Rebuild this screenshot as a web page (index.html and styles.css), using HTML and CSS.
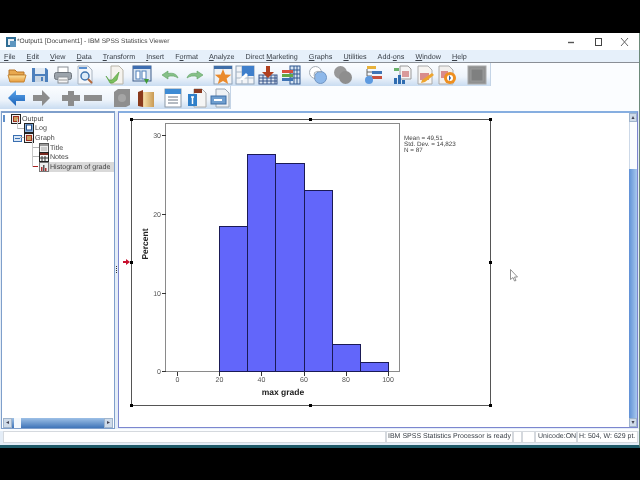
FILE: index.html
```html
<!DOCTYPE html>
<html lang="en">
<head>
<meta charset="utf-8">
<title>Output1 [Document1] - IBM SPSS Statistics Viewer</title>
<link rel="stylesheet" href="styles.css">
</head>
<body>
<svg class="sprite" width="0" height="0" aria-hidden="true">
  <defs>
    <linearGradient id="gOrange" x1="0" y1="0" x2="0" y2="1"><stop offset="0" stop-color="#fbe3a0"/><stop offset="1" stop-color="#e89a3a"/></linearGradient>
    <linearGradient id="gBlue" x1="0" y1="0" x2="0" y2="1"><stop offset="0" stop-color="#5aa4ea"/><stop offset="1" stop-color="#1b62b8"/></linearGradient>
    <linearGradient id="gBook" x1="0" y1="0" x2="1" y2="0"><stop offset="0" stop-color="#8a3a1c"/><stop offset=".3" stop-color="#8a3a1c"/><stop offset=".35" stop-color="#f6dfa8"/><stop offset="1" stop-color="#c99a54"/></linearGradient>
    <symbol id="i-open" viewBox="0 0 20 20"><path d="M2 5h6l2 2h7v3H2z" fill="#e9a94f" stroke="#b9772a"/><path d="M1 10h18l-2 7H3z" fill="url(#gOrange)" stroke="#c58432"/></symbol>
    <symbol id="i-save" viewBox="0 0 20 20"><path d="M2 3h14l2 2v12H2z" fill="#4d80bd"/><rect x="5" y="3" width="10" height="6" fill="#dfe9f4"/><rect x="5" y="11" width="10" height="6" fill="#c9d6e4"/><rect x="11" y="12" width="2" height="4" fill="#4d80bd"/></symbol>
    <symbol id="i-print" viewBox="0 0 20 20"><rect x="5" y="2" width="10" height="6" fill="#fff" stroke="#8a8f96"/><rect x="1.5" y="7.5" width="17" height="7" rx="2" fill="#9ba3ab" stroke="#6d747c"/><rect x="5" y="12" width="10" height="6" fill="#f5f5f5" stroke="#8a8f96"/><path d="M6 15h8" stroke="#999"/></symbol>
    <symbol id="i-preview" viewBox="0 0 20 20"><path d="M3 1h10l4 4v14H3z" fill="#f4f7fb" stroke="#aab4c0"/><rect x="4" y="2" width="8" height="2" fill="#5a90d0"/><circle cx="10" cy="11" r="4" fill="#dcebf8" stroke="#3f74ae" stroke-width="1.5"/><path d="M13 14l4 4" stroke="#b5683a" stroke-width="2"/></symbol>
    <symbol id="i-recall" viewBox="0 0 20 20"><path d="M6 1h8l4 4v14H6z" fill="#f5f3ee" stroke="#b8b4a8"/><path d="M1 11l3 4 3 0 7-8-2 8-4 3H5z" fill="#7dbf5f" stroke="#4f9a38" stroke-width=".6"/></symbol>
    <symbol id="i-goto" viewBox="0 0 20 20"><rect x="1" y="1" width="18" height="15" fill="#dbe6f2" stroke="#3f5f8c"/><rect x="1" y="1" width="18" height="3" fill="#3d6db0"/><rect x="4" y="6" width="4" height="8" fill="#fff" stroke="#4f7fb8"/><rect x="10" y="6" width="4" height="8" fill="#fff" stroke="#4f7fb8"/><path d="M12 14h5l-2.500 5z" fill="#3f9a36"/></symbol>
    <symbol id="i-undo" viewBox="0 0 20 20"><path d="M2 10l6-4v2.500c5-1 9 .5 10 4.500-3-2-6-2.500-10-1.500V14z" fill="#86c088" stroke="#5da060" stroke-width=".6"/></symbol>
    <symbol id="i-redo" viewBox="0 0 20 20"><path d="M18 10l-6-4v2.500c-5-1-9 .5-10 4.500 3-2 6-2.500 10-1.500V14z" fill="#86c088" stroke="#5da060" stroke-width=".6"/></symbol>
    <symbol id="i-star" viewBox="0 0 20 20"><rect x="1" y="1" width="18" height="18" fill="#f0f2f5" stroke="#8ea2b8"/><rect x="1" y="1" width="18" height="3" fill="#3f6ea8"/><path d="M10 4l2.200 5.500 6 .3-4.600 3.700 1.600 5.500-5.200-3-5.200 3 1.600-5.500-4.600-3.700 6-.3z" fill="#ea8a2c"/></symbol>
    <symbol id="i-gocase" viewBox="0 0 20 20"><rect x="1" y="1" width="18" height="18" fill="#f2f4f7" stroke="#8ea2b8"/><path d="M1 7h18M1 13h18M7 1v18M13 1v18" stroke="#a9b7c6"/><rect x="7" y="1" width="12" height="10" fill="#3f7fcb"/><path d="M4 15l7-7 2 2-5 5z" fill="#fff"/></symbol>
    <symbol id="i-insert" viewBox="0 0 20 20"><rect x="1" y="10" width="18" height="9" fill="#dfe7f0" stroke="#37558a"/><path d="M1 13h18M1 16h18M5 10v9M9 10v9M13 10v9M17 10v9" stroke="#37558a"/><path d="M8 1h4v6h4l-6 6-6-6h4z" fill="#b0401f"/></symbol>
    <symbol id="i-table" viewBox="0 0 20 20"><rect x="9" y="1" width="10" height="18" fill="#d9e6f3" stroke="#2f568f"/><path d="M9 5h10M9 9h10M9 13h10M13 1v18M16 1v18" stroke="#2f568f"/><rect x="1" y="5" width="11" height="3" fill="#d94f3d"/><rect x="1" y="9" width="11" height="3" fill="#62a845"/><rect x="1" y="13" width="11" height="3" fill="#3f74b5"/></symbol>
    <symbol id="i-sets" viewBox="0 0 20 20"><circle cx="7.500" cy="7.500" r="6" fill="#fff" stroke="#a6aeb6"/><circle cx="12.500" cy="12.500" r="6" fill="#8db8ea" stroke="#6f95c4"/><path d="M7.500 13.500a6 6 0 0 1-1-6 6 6 0 0 1 7 0" fill="none" stroke="#a6aeb6"/></symbol>
    <symbol id="i-setsoff" viewBox="0 0 20 20"><circle cx="7.500" cy="7.500" r="6.500" fill="#989898"/><circle cx="12.500" cy="12.500" r="6.500" fill="#8e8e8e"/></symbol>
    <symbol id="i-tree" viewBox="0 0 20 20"><rect x="4" y="1" width="9" height="3" fill="#e8b23c"/><rect x="9" y="6" width="10" height="3" fill="#3f74b5"/><rect x="9" y="11" width="10" height="3" fill="#c8503c"/><path d="M4 4v7h5M4 7h5" stroke="#666" fill="none"/><circle cx="6" cy="15" r="4" fill="#5d9ae0"/></symbol>
    <symbol id="i-chartdoc" viewBox="0 0 20 20"><path d="M8 1h8l3 3v10H8z" fill="#f5f5f5" stroke="#9a9a9a"/><rect x="10" y="6" width="7" height="6" fill="#d99a9a"/><path d="M2 3h5v3H2z" fill="#69b26a"/><rect x="2" y="13" width="3" height="6" fill="#2f6cb0"/><rect x="6" y="10" width="3" height="9" fill="#2f6cb0"/><rect x="10" y="15" width="3" height="4" fill="#2f6cb0"/></symbol>
    <symbol id="i-docpen" viewBox="0 0 20 20"><path d="M3 1h10l4 4v14H3z" fill="#f7f5f2" stroke="#aaa"/><rect x="5" y="8" width="9" height="7" fill="#d98c8c"/><path d="M7 15l10-7 2 2-9 7-4 1z" fill="#eda52f"/></symbol>
    <symbol id="i-docplay" viewBox="0 0 20 20"><path d="M2 1h10l4 4v14H2z" fill="#f2f0ee" stroke="#aaa"/><rect x="4" y="6" width="7" height="7" fill="#d98c8c"/><circle cx="13" cy="13" r="6" fill="#ee8f1f"/><circle cx="13" cy="13" r="3" fill="#fff"/><path d="M12 10l2 3-2 3z" fill="#2d5f9f"/></symbol>
    <symbol id="i-gray" viewBox="0 0 20 20"><rect x="1" y="1" width="18" height="18" fill="#8f9090" stroke="#a8a8a8"/><rect x="4" y="4" width="12" height="12" fill="#7f8080" stroke="#999"/></symbol>
    <symbol id="i-back" viewBox="0 0 20 20"><path d="M1 10l8-8v5h9v6H9v5z" fill="url(#gBlue)"/></symbol>
    <symbol id="i-fwd" viewBox="0 0 20 20"><path d="M19 10l-8-8v5H2v6h9v5z" fill="#8c8c8c"/></symbol>
    <symbol id="i-plus" viewBox="0 0 20 20"><path d="M7 3h6v4h6v6h-6v5H7v-5H1V7h6z" fill="#8c8c8c"/></symbol>
    <symbol id="i-minus" viewBox="0 0 20 20"><rect x="1" y="7" width="18" height="6" fill="#8c8c8c"/></symbol>
    <symbol id="i-box" viewBox="0 0 20 20"><path d="M2 4l4-3h12v16l-4 2H2z" fill="#8e8e8e"/><circle cx="10" cy="10" r="4" fill="#a5a5a5"/></symbol>
    <symbol id="i-book" viewBox="0 0 20 20"><path d="M2 4l5-2v2h11v15H7l-5-1z" fill="url(#gBook)"/></symbol>
    <symbol id="i-head" viewBox="0 0 20 20"><rect x="2" y="1" width="16" height="18" fill="#fff" stroke="#8a97a6"/><rect x="2" y="1" width="16" height="5" fill="#3d8bd4"/><path d="M5 9h10M5 12h10M5 15h10" stroke="#6b7785"/></symbol>
    <symbol id="i-txt" viewBox="0 0 20 20"><path d="M7 1h8l4 4v14H7z" fill="#f5f5f5" stroke="#aaa"/><rect x="7" y="1" width="8" height="4" fill="#8b3a20"/><rect x="1" y="6" width="9" height="12" fill="#2f7fc8"/><path d="M4 9h3M5.500 9v7" stroke="#fff" stroke-width="1.500"/></symbol>
    <symbol id="i-export" viewBox="0 0 20 20"><path d="M6 1h9l4 4v14H6z" fill="#eef1f4" stroke="#9aa5b1"/><rect x="1" y="8" width="15" height="8" fill="#6f9ecf" stroke="#3f6fa5"/><path d="M4 12h8" stroke="#fff" stroke-width="2"/></symbol>
    <symbol id="n-doc" viewBox="0 0 10 10"><rect x=".5" y=".5" width="9" height="9" fill="#eee" stroke="#222"/><rect x="2.500" y="2.500" width="5" height="5" fill="#c9a060" stroke="#a03020"/></symbol>
    <symbol id="n-log" viewBox="0 0 10 10"><rect x=".5" y=".5" width="9" height="9" fill="#8db4dc" stroke="#222"/><rect x="2.500" y="2" width="5" height="5" fill="#fff" stroke="#244f8a"/></symbol>
    <symbol id="n-title" viewBox="0 0 10 10"><rect x=".5" y=".5" width="9" height="9" fill="#eee" stroke="#555"/><rect x="1" y="1" width="8" height="2" fill="#999"/><path d="M2 5h6M2 7h6" stroke="#aaa"/></symbol>
    <symbol id="n-notes" viewBox="0 0 10 10"><rect x=".5" y=".5" width="9" height="9" fill="#f4f4f4" stroke="#222"/><rect x="1" y="1" width="8" height="2" fill="#7a2b22"/><path d="M3 4v5M6 4v5M1 6h8" stroke="#333"/></symbol>
    <symbol id="n-hist" viewBox="0 0 10 10"><rect x=".5" y=".5" width="9" height="9" fill="#eee" stroke="#777"/><rect x="2" y="5" width="1.500" height="4" fill="#a33"/><rect x="4" y="3" width="1.500" height="6" fill="#555"/><rect x="6" y="6" width="1.500" height="3" fill="#a33"/></symbol>
  </defs>
</svg>

<div class="window">
  <header class="titlebar">
    <svg class="app-icon" viewBox="0 0 12 12" aria-hidden="true"><rect x="1" y="1" width="10" height="10" fill="#2f6d94"/><rect x="3" y="3" width="6" height="6" fill="#e8eef4"/><rect x="5" y="5" width="6" height="6" fill="#5f97c0"/></svg>
    <span class="title-text">*Output1 [Document1] - IBM SPSS Statistics Viewer</span>
    <div class="winctl">
      <svg class="ctl" viewBox="0 0 10 10" aria-hidden="true"><path d="M0 5.500h6" stroke="#555" stroke-width="1.400"/></svg>
      <svg class="ctl" viewBox="0 0 10 10" aria-hidden="true"><rect x="1.500" y="1.500" width="6" height="7" fill="none" stroke="#444"/></svg>
      <svg class="ctl" viewBox="0 0 10 10" aria-hidden="true"><path d="M1 1l7 8M8 1L1 9" stroke="#666"/></svg>
    </div>
  </header>

  <nav class="menubar">
    <span class="m"><u>F</u>ile</span>
    <span class="m"><u>E</u>dit</span>
    <span class="m"><u>V</u>iew</span>
    <span class="m"><u>D</u>ata</span>
    <span class="m"><u>T</u>ransform</span>
    <span class="m"><u>I</u>nsert</span>
    <span class="m">F<u>o</u>rmat</span>
    <span class="m"><u>A</u>nalyze</span>
    <span class="m">Direct <u>M</u>arketing</span>
    <span class="m"><u>G</u>raphs</span>
    <span class="m"><u>U</u>tilities</span>
    <span class="m">Add-<u>o</u>ns</span>
    <span class="m"><u>W</u>indow</span>
    <span class="m"><u>H</u>elp</span>
  </nav>

  <div class="toolbar tb1">
    <svg class="ic"><use href="#i-open"/></svg>
    <svg class="ic d1"><use href="#i-save"/></svg>
    <svg class="ic d1"><use href="#i-print"/></svg>
    <svg class="ic"><use href="#i-preview"/></svg>
    <svg class="ic d8"><use href="#i-recall"/></svg>
    <svg class="ic d5"><use href="#i-goto"/></svg>
    <svg class="ic d6"><use href="#i-undo"/></svg>
    <svg class="ic d3"><use href="#i-redo"/></svg>
    <svg class="ic d6"><use href="#i-star"/></svg>
    <svg class="ic"><use href="#i-gocase"/></svg>
    <svg class="ic d1"><use href="#i-insert"/></svg>
    <svg class="ic d1"><use href="#i-table"/></svg>
    <svg class="ic d5"><use href="#i-sets"/></svg>
    <svg class="ic d3"><use href="#i-setsoff"/></svg>
    <svg class="ic d8"><use href="#i-tree"/></svg>
    <svg class="ic d7"><use href="#i-chartdoc"/></svg>
    <svg class="ic d1"><use href="#i-docpen"/></svg>
    <svg class="ic"><use href="#i-docplay"/></svg>
    <svg class="ic d8"><use href="#i-gray"/></svg>
  </div>

  <div class="toolbar tb2">
    <svg class="ic"><use href="#i-back"/></svg>
    <svg class="ic d2"><use href="#i-fwd"/></svg>
    <svg class="ic d8"><use href="#i-plus"/></svg>
    <svg class="ic"><use href="#i-minus"/></svg>
    <svg class="ic d7"><use href="#i-box"/></svg>
    <svg class="ic d2"><use href="#i-book"/></svg>
    <svg class="ic d5"><use href="#i-head"/></svg>
    <svg class="ic d2"><use href="#i-txt"/></svg>
    <svg class="ic d1"><use href="#i-export"/></svg>
  </div>

  <main class="panes">
    <aside class="outline">
      <ul class="tree">
        <li class="row lvl0"><span class="exp exp-min"></span><svg class="node"><use href="#n-doc"/></svg><span class="lbl">Output</span></li>
        <li class="row lvl1"><span class="branch"></span><svg class="node"><use href="#n-log"/></svg><span class="lbl">Log</span></li>
        <li class="row lvl1"><span class="exp exp-box"></span><svg class="node"><use href="#n-doc"/></svg><span class="lbl">Graph</span></li>
        <li class="row lvl2"><span class="branch"></span><svg class="node"><use href="#n-title"/></svg><span class="lbl">Title</span></li>
        <li class="row lvl2"><span class="branch"></span><svg class="node"><use href="#n-notes"/></svg><span class="lbl">Notes</span></li>
        <li class="row lvl2"><span class="branch branch-red"></span><span class="sel"><svg class="node"><use href="#n-hist"/></svg><span class="lbl">Histogram of grade</span></span></li>
      </ul>
      <div class="hscroll">
        <span class="sb-btn">&#9666;</span>
        <span class="hthumb"></span>
        <span class="htrack"></span>
        <span class="sb-btn">&#9656;</span>
      </div>
    </aside>
    <div class="splitter"><span class="grip"></span></div>
    <section class="content">
      <svg class="canvas" viewBox="0 0 510 315" aria-label="Histogram of max grade">
        <g transform="translate(-119,-113)">
          <rect class="frame" x="131.500" y="119.500" width="359" height="286"/>
          <g class="handle">
            <rect x="130" y="118" width="3" height="3"/><rect x="309" y="118" width="3" height="3"/><rect x="489" y="118" width="3" height="3"/>
            <rect x="130" y="261" width="3" height="3"/><rect x="489" y="261" width="3" height="3"/>
            <rect x="130" y="404" width="3" height="3"/><rect x="309" y="404" width="3" height="3"/><rect x="489" y="404" width="3" height="3"/>
          </g>
          <path d="M123 261h3v-2l4 3-4 3v-2h-3z" fill="#c8102e"/>
          <rect class="plot" x="165.500" y="123.500" width="234" height="248"/>
          <g class="bar">
            <rect x="219.500" y="226.500" width="28" height="145"/>
            <rect x="247.500" y="154.500" width="28" height="217"/>
            <rect x="275.500" y="163.500" width="29" height="208"/>
            <rect x="304.500" y="190.500" width="28" height="181"/>
            <rect x="332.500" y="344.500" width="28" height="27"/>
            <rect x="360.500" y="362.500" width="28" height="9"/>
          </g>
          <path class="tick" d="M162 135.500h4M162 214.500h4M162 293.500h4M162 371.500h4M177.500 372v4M219.500 372v4M261.500 372v4M304.500 372v4M346.500 372v4M388.500 372v4"/>
          <g class="axnum">
            <text x="161" y="137.500" text-anchor="end">30</text>
            <text x="161" y="216.500" text-anchor="end">20</text>
            <text x="161" y="295.500" text-anchor="end">10</text>
            <text x="161" y="373.500" text-anchor="end">0</text>
            <text x="177.500" y="382" text-anchor="middle">0</text>
            <text x="219.500" y="382" text-anchor="middle">20</text>
            <text x="261.500" y="382" text-anchor="middle">40</text>
            <text x="304" y="382" text-anchor="middle">60</text>
            <text x="346" y="382" text-anchor="middle">80</text>
            <text x="388" y="382" text-anchor="middle">100</text>
          </g>
          <text class="axtitle" x="283" y="395" text-anchor="middle">max grade</text>
          <text class="axtitle" transform="translate(148,244) rotate(-90)" text-anchor="middle">Percent</text>
          <g class="stats">
            <text x="404" y="140">Mean = 49,51</text>
            <text x="404" y="146">Std. Dev. = 14,823</text>
            <text x="404" y="152">N = 87</text>
          </g>
          <path d="M510.500 269.500v10l2.500-2 1.500 3.500 1.500-.5-1.500-3.500h3z" fill="#fff" stroke="#777" stroke-width=".8"/>
        </g>
      </svg>
      <div class="vscroll">
        <span class="sb-btn">&#9652;</span>
        <span class="vthumb"></span>
        <span class="vtrack"></span>
        <span class="sb-btn">&#9662;</span>
      </div>
    </section>
  </main>

  <footer class="status">
    <span class="cell cell-grow"></span>
    <span class="cell cell-proc">IBM SPSS Statistics Processor is ready</span>
    <span class="cell cell-gap"></span>
    <span class="cell cell-blank"></span>
    <span class="cell cell-uni">Unicode:ON</span>
    <span class="cell cell-size">H: 504, W: 629 pt.</span>
  </footer>
</div>
</body>
</html>
```

FILE: styles.css
```css
* { box-sizing: border-box; }
html, body { margin: 0; height: 100%; }
body {
  background: #000;
  padding-top: 33px;
  overflow: hidden;
  font-family: "Liberation Sans", Arial, sans-serif;
  color: #333;
  text-rendering: geometricPrecision;
}
.sprite { position: absolute; }

.window {
  width: 640px;
  height: 415px;
  display: flex;
  flex-direction: column;
  background: #fbfdff;
  border-bottom: 3px solid #1f5a68;
  border-right: 1px solid #6d8a7a;
  will-change: transform;
}

/* title bar */
.titlebar {
  height: 17px;
  flex: none;
  background: #fff;
  display: flex;
  align-items: center;
  padding-left: 5px;
  font-size: 6.6px;
  color: #444;
}
.app-icon { width: 12px; height: 12px; margin-right: 0; }
.winctl { margin-left: auto; display: flex; gap: 16px; padding-right: 9px; }
.ctl { width: 10px; height: 10px; }

/* menu bar */
.menubar {
  height: 13px;
  flex: none;
  background: #e6f0fa;
  border-bottom: 1px solid #8a8f96;
  display: flex;
  align-items: center;
  gap: 11px;
  font-size: 7.2px;
  color: #3a4048;
  padding-left: 4px;
}
.m { display: block; white-space: nowrap; }

/* toolbars */
.toolbar {
  display: flex;
  align-items: center;
  gap: 2px;
  height: 23px;
  flex: none;
  padding-left: 7px;
  border-right: 1px solid #c4d4e6;
  background: linear-gradient(#fbfdff, #eef4fb 60%, #c9dcf1);
}
.tb1 { width: 491px; }
.tb2 { width: 231px; padding-left: 7px; }
.ic { width: 20px; height: 20px; flex: none; }
.d1 { margin-left: 1px; }
.d2 { margin-left: 2px; }
.d3 { margin-left: 3px; }
.d5 { margin-left: 5px; }
.d6 { margin-left: 6px; }
.d7 { margin-left: 7px; }
.d8 { margin-left: 8px; }

/* panes */
.panes {
  flex: 1;
  min-height: 0;
  display: flex;
  margin-top: 2px;
  padding: 0 1px 0 1px;
  background: #e4edf7;
}
.outline {
  width: 114px;
  flex: none;
  background: #fff;
  border: 1px solid #7f9fcb;
  border-top-width: 2px;
  display: flex;
  flex-direction: column;
  height: 318px;
}
.tree {
  list-style: none;
  margin: 0;
  padding: 1px 0 0;
  flex: 1;
  font-size: 7.1px;
  color: #444;
}
.row { height: 9.6px; display: flex; align-items: center; white-space: nowrap; }
.lvl1 { padding-left: 11px; }
.lvl2 { padding-left: 26px; }
.exp, .branch { flex: none; width: 11px; height: 9.6px; position: relative; display: block; }
.exp-min { width: 9px; }
.exp-min::before {
  content: "";
  position: absolute;
  left: 1px; top: 1px;
  width: 2px; height: 7px;
  background: #5f8fc9;
}
.branch::before {
  content: "";
  position: absolute;
  left: 4px; top: 4px;
  width: 7px; height: 1px;
  background: #b5b5b5;
}
.branch::after {
  content: "";
  position: absolute;
  left: 4px; top: -5px;
  width: 1px; height: 10px;
  background: #c8c8c8;
}
.branch-red::before {
  left: 5px;
  width: 5px;
  background: #a82020;
}
.exp-box::before {
  content: "";
  position: absolute;
  left: 0; top: 2px;
  width: 7px; height: 5px;
  background: linear-gradient(#3a6fb0, #3a6fb0) center / 5px 1px no-repeat #dbe7f5;
  border: 1px solid #3a6fb0;
}
.exp-box::after {
  content: "";
  position: absolute;
  left: 7px; top: 4px;
  width: 4px; height: 1px;
  background: #b5b5b5;
}
.node { width: 10px; height: 10px; flex: none; }
.lbl { padding: 0 1px; }
.sel { flex: 1; display: flex; align-items: center; background: #d9d9d9; }

.hscroll, .vscroll { display: flex; flex: none; background: linear-gradient(#9dc0e6, #3f74b8); }
.hscroll { height: 10px; margin: 0 1px 0 1px; align-items: stretch; }
.sb-btn {
  flex: none;
  width: 9px;
  background: #cfdbe9;
  border: 1px solid #9fb4cc;
  font-size: 6px;
  line-height: 8px;
  text-align: center;
  color: #445;
  overflow: hidden;
}
.hthumb { width: 7px; margin-left: 2px; background: #f4f8fc; flex: none; }
.htrack { flex: 1; }

.splitter { width: 3px; flex: none; position: relative; }
.grip {
  position: absolute;
  left: 1px; top: 155px;
  width: 1px; height: 8px;
  background: repeating-linear-gradient(#333 0 1px, transparent 1px 2px);
}

.content {
  flex: 1;
  min-width: 0;
  height: 317px;
  background: #fff;
  border: 1px solid #7c86cf;
  border-top: 2px solid #86aee0;
  display: flex;
}
.canvas { width: 510px; height: 315px; flex: none; display: block; }
.vscroll {
  flex: none;
  width: 8px;
  margin-left: auto;
  flex-direction: column;
  background: linear-gradient(90deg, #5f90d6, #a8c8ee);
}
.vscroll .sb-btn { width: 8px; height: 9px; line-height: 8px; }
.vthumb { height: 47px; background: #fbfdff; border-left: 1px solid #cdd9e8; flex: none; }
.vtrack { flex: 1; }

/* chart */
.frame { fill: #fff; stroke: #555; stroke-width: 1; }
.handle rect { fill: #000; }
.plot { fill: #fff; stroke: #8a8a8a; stroke-width: 1; }
.bar rect { fill: #6266fa; stroke: #1a1a55; stroke-width: 1; }
.tick { stroke: #333; stroke-width: 1; fill: none; }
.axnum { font-size: 7px; fill: #555; }
.axtitle { font-size: 8.500px; font-weight: bold; fill: #222; }
.stats { font-size: 6.300px; fill: #444; }

/* status bar */
.status {
  height: 14px;
  flex: none;
  display: flex;
  align-items: flex-start;
  padding: 0 1px 0 3px;
  margin-top: 2px;
  font-size: 7px;
  color: #3a4048;
  background: #e4edf7;
  white-space: nowrap;
}
.cell { display: block; height: 12px; line-height: 10px; background: #fff; border: 1px solid #d5d9de; padding: 0 1px; }
.cell-grow { flex: 1; }
.cell-proc { width: 127px; }
.cell-gap { width: 9px; }
.cell-blank { width: 13px; }
.cell-uni { width: 42px; padding-left: 2px; }
.cell-size { width: 61px; padding-left: 1px; }
```
